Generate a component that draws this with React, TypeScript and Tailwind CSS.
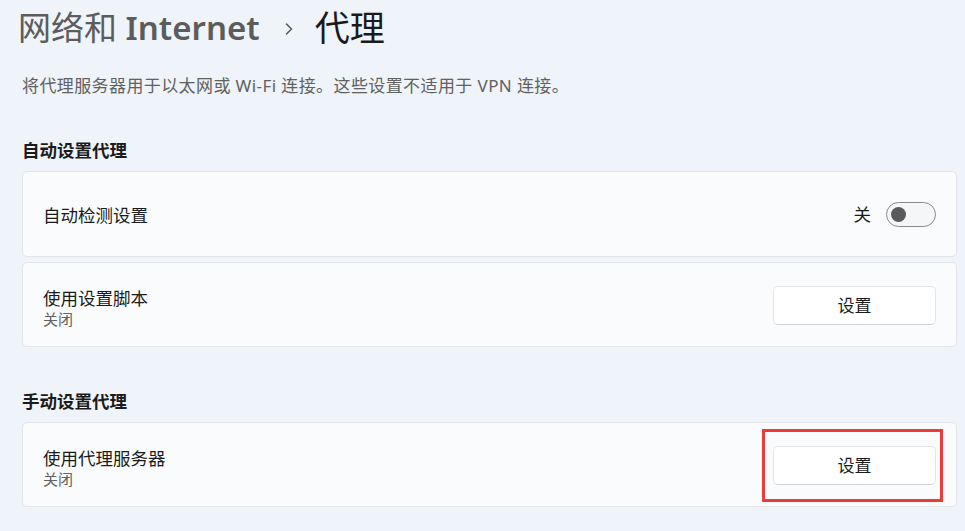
import React from "react";

const FONT = {
  fontFamily: '"Noto Sans", "Noto Sans CJK SC", sans-serif',
};

function Chevron() {
  return (
    <svg width="10" height="14" viewBox="0 0 10 14" className="ml-[24px] mr-[21px] mt-[2px]">
      <polyline points="2.5,2 7.5,7 2.5,12" fill="none" stroke="#5c5c5c" strokeWidth="1.6" strokeLinecap="round" strokeLinejoin="round" />
    </svg>
  );
}

function Toggle() {
  return (
    <div className="w-[50px] h-[25px] rounded-full border border-[#8a8a8a] bg-[#f5f6f8] flex items-center pl-[4px]">
      <div className="w-[15px] h-[15px] rounded-full bg-[#5a5a5a]" />
    </div>
  );
}

function SetButton() {
  return (
    <button className="w-[163px] h-[39px] mt-[2px] rounded-[5px] bg-white border border-[#e4e5e8] border-b-[#cfd1d6] text-[17px] text-[#1b1b1b] flex items-center justify-center">
      设置
    </button>
  );
}

function Card({ title, sub, right, h }: { title: string; sub?: string; right: React.ReactNode; h: string }) {
  return (
    <div className={`${h} w-[935px] rounded-[5px] bg-[#fafbfd] border border-[#e3e5ea] flex items-center justify-between pl-[20px] pr-[20px]`}>
      <div className={sub ? "flex flex-col pt-[7px]" : "flex flex-col pt-[2px]"}>
        <span className="text-[17.5px] leading-[22px] text-[#1b1b1b]">{title}</span>
        {sub && <span className="text-[15px] leading-[20px] text-[#616161]">{sub}</span>}
      </div>
      {right}
    </div>
  );
}

export default function App() {
  return (
    <div className="relative w-[965px] h-[531px] overflow-hidden bg-[#eff3fa] pl-[22px]" style={FONT}>
      <div className="flex items-center h-[40px] mt-[8px] -ml-[4px]">
        <span className="text-[33px] leading-[40px] text-[#5c5c5c]">
          网络和 <span className="font-semibold">Internet</span>
        </span>
        <Chevron />
        <span className="text-[35px] leading-[40px] text-[#1a1a1a]">代理</span>
      </div>

      <p className="mt-[26px] text-[17px] leading-[24px] tracking-[0.4px] text-[#616161]">
        将代理服务器用于以太网或 Wi-Fi 连接。这些设置不适用于 VPN 连接。
      </p>

      <h2 className="mt-[40px] text-[17.5px] leading-[24px] font-semibold text-[#1b1b1b]">自动设置代理</h2>

      <div className="mt-[9px] flex flex-col gap-[5px]">
        <Card
          h="h-[86px]"
          title="自动检测设置"
          right={
            <div className="flex items-center gap-[15px]">
              <span className="text-[17.5px] text-[#1b1b1b]">关</span>
              <Toggle />
            </div>
          }
        />
        <Card h="h-[85px]" title="使用设置脚本" sub="关闭" right={<SetButton />} />
      </div>

      <h2 className="mt-[42px] text-[17.5px] leading-[24px] font-semibold text-[#1b1b1b]">手动设置代理</h2>

      <div className="mt-[9px]">
        <Card h="h-[85px]" title="使用代理服务器" sub="关闭" right={<SetButton />} />
      </div>

      {/* highlight box drawn over the button */}
      <div className="absolute left-[762px] top-[429px] w-[181px] h-[73px] border-[3px] border-[#f03a3a]" />
    </div>
  );
}
